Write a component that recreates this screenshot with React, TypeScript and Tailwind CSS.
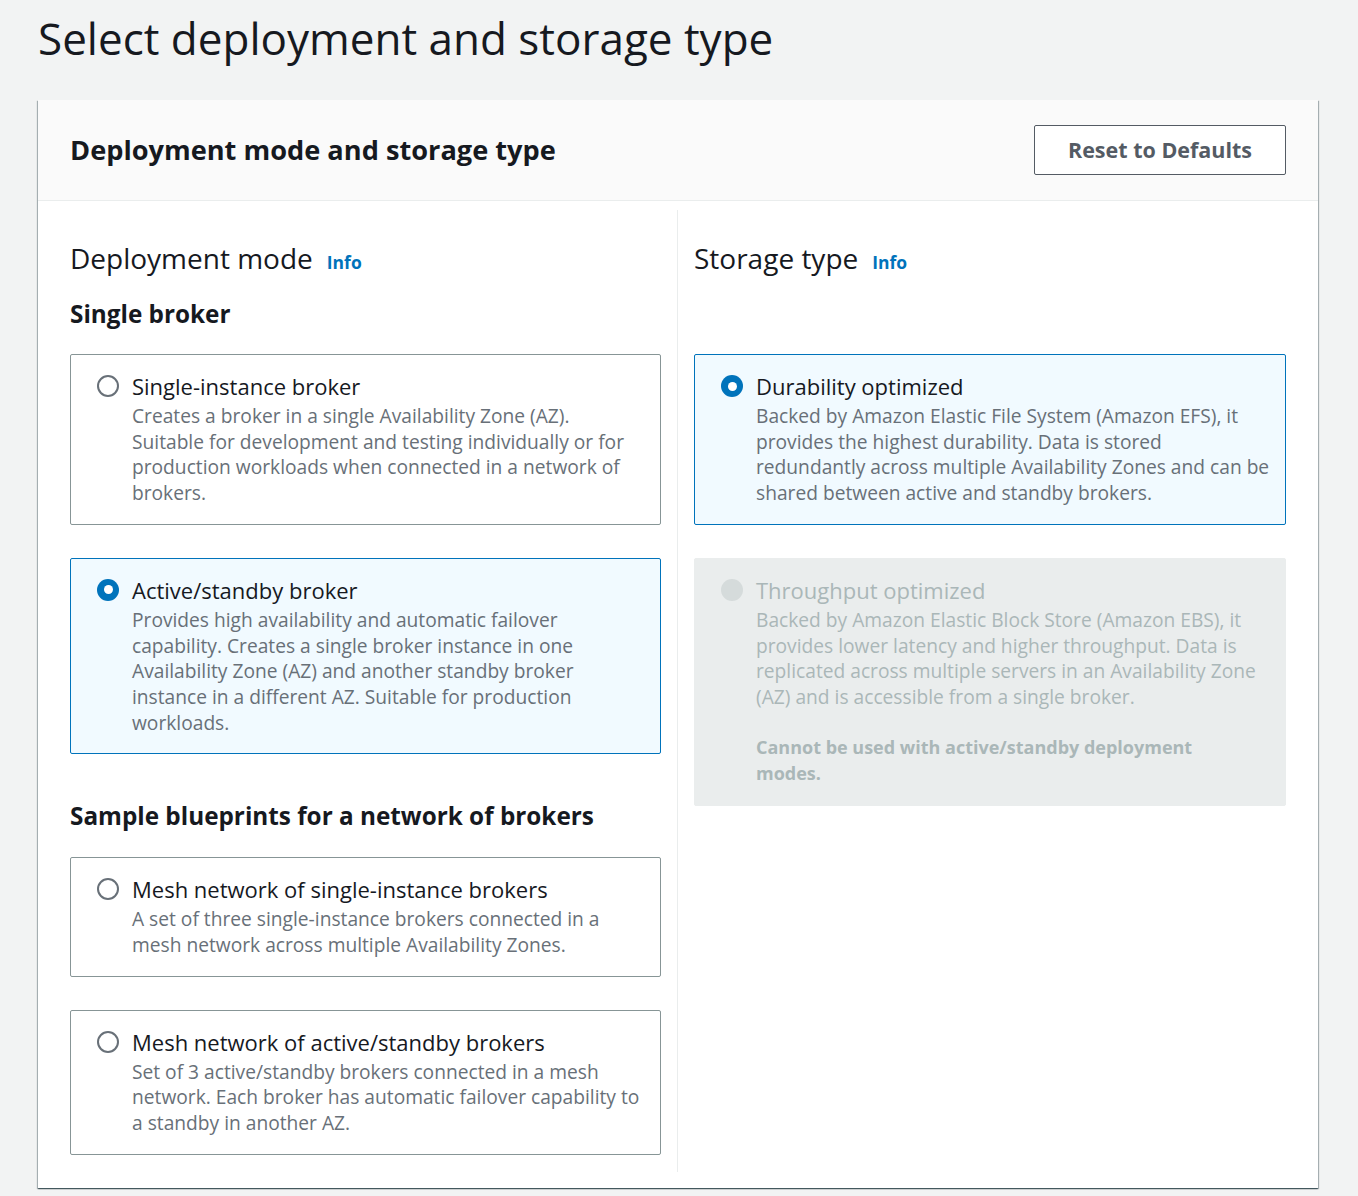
import React from "react";

type Opt = {
  title: string;
  lines: string[];
  extra?: string[];
  state: "off" | "on" | "disabled";
};

function Radio({ state }: { state: Opt["state"] }) {
  if (state === "on") {
    return (
      <span className="mt-[4px] flex h-[22px] w-[22px] shrink-0 items-center justify-center rounded-full bg-[#0073bb]">
        <span className="h-[9px] w-[9px] rounded-full bg-white" />
      </span>
    );
  }
  if (state === "disabled") {
    return <span className="mt-[4px] block h-[22px] w-[22px] shrink-0 rounded-full bg-[#d5dbdb]" />;
  }
  return <span className="mt-[4px] block h-[22px] w-[22px] shrink-0 rounded-full border-[2px] border-[#687078] bg-white" />;
}

function OptionCard({ o }: { o: Opt }) {
  const box =
    o.state === "on"
      ? "border-[#0073bb] bg-[#f1faff]"
      : o.state === "disabled"
      ? "border-[#eaeded] bg-[#eaeded]"
      : "border-[#879596] bg-white";
  const titleColor = o.state === "disabled" ? "text-[#aab7b8]" : "text-[#16191f]";
  const descColor = o.state === "disabled" ? "text-[#aab7b8]" : "text-[#687078]";
  return (
    <div className={`flex gap-[13px] rounded-[2px] border pl-[26px] pr-[16px] pt-[16px] pb-[18px] ${box}`}>
      <Radio state={o.state} />
      <div className="flex flex-col">
        <div className={`text-[22px] leading-[30px] ${titleColor}`}>{o.title}</div>
        <div className={`mt-[2px] flex flex-col text-[19.2px] leading-[25.7px] ${descColor}`}>
          {o.lines.map((l) => (
            <span key={l} className="whitespace-nowrap">
              {l}
            </span>
          ))}
        </div>
        {o.extra && (
          <div className={`mt-[25.7px] flex flex-col text-[18px] font-bold leading-[25.7px] ${descColor}`}>
            {o.extra.map((l) => (
              <span key={l} className="whitespace-nowrap">
                {l}
              </span>
            ))}
          </div>
        )}
      </div>
    </div>
  );
}

function H2({ children }: { children: React.ReactNode }) {
  return (
    <div className="flex items-baseline gap-[14px] leading-[36px]">
      <span className="text-[28px] text-[#16191f]">{children}</span>
      <span className="text-[17.5px] font-bold text-[#0073bb]">Info</span>
    </div>
  );
}

export default function App() {
  return (
    <div
      className="min-h-[1196px] bg-[#f2f3f3] pl-[38px] pr-[40px] pt-[8px]"
      style={{ fontFamily: '"Open Sans", "Noto Sans", sans-serif' }}
    >
      <h1 className="text-[44px] leading-[60px] text-[#16191f]">Select deployment and storage type</h1>
      <div className="mt-[32px] bg-white shadow-[0_1px_1px_0_rgba(0,28,36,0.5),1px_1px_1px_0_rgba(0,28,36,0.25),-1px_1px_1px_0_rgba(0,28,36,0.25)]">
        <div className="flex h-[101px] items-center justify-between border-b border-[#eaeded] bg-[#fafafa] px-[32px]">
          <h2 className="text-[27.2px] font-bold text-[#16191f]">Deployment mode and storage type</h2>
          <button className="flex h-[50px] w-[252px] items-center justify-center rounded-[2px] border border-[#545b64] bg-white text-[21.5px] font-bold text-[#545b64]">
            Reset to Defaults
          </button>
        </div>
        <div className="flex px-[32px] pt-[9px] pb-[16px]">
          <div className="flex w-[591px] flex-col pt-[30px] pb-[17px]">
            <H2>Deployment mode</H2>
            <div className="mt-[18px] text-[24.3px] font-bold leading-[32px] text-[#16191f]">Single broker</div>
            <div className="mt-[24px] flex flex-col gap-[33px]">
              <OptionCard
                o={{
                  title: "Single-instance broker",
                  lines: [
                    "Creates a broker in a single Availability Zone (AZ).",
                    "Suitable for development and testing individually or for",
                    "production workloads when connected in a network of",
                    "brokers.",
                  ],
                  state: "off",
                }}
              />
              <OptionCard
                o={{
                  title: "Active/standby broker",
                  lines: [
                    "Provides high availability and automatic failover",
                    "capability. Creates a single broker instance in one",
                    "Availability Zone (AZ) and another standby broker",
                    "instance in a different AZ. Suitable for production",
                    "workloads.",
                  ],
                  state: "on",
                }}
              />
            </div>
            <div className="mt-[46px] text-[24.3px] font-bold leading-[32px] text-[#16191f]">
              Sample blueprints for a network of brokers
            </div>
            <div className="mt-[25px] flex flex-col gap-[33px]">
              <OptionCard
                o={{
                  title: "Mesh network of single-instance brokers",
                  lines: [
                    "A set of three single-instance brokers connected in a",
                    "mesh network across multiple Availability Zones.",
                  ],
                  state: "off",
                }}
              />
              <OptionCard
                o={{
                  title: "Mesh network of active/standby brokers",
                  lines: [
                    "Set of 3 active/standby brokers connected in a mesh",
                    "network. Each broker has automatic failover capability to",
                    "a standby in another AZ.",
                  ],
                  state: "off",
                }}
              />
            </div>
          </div>
          <div className="mx-[16px] w-px bg-[#eaeded]" />
          <div className="flex w-[592px] flex-col pt-[30px]">
            <H2>Storage type</H2>
            <div className="mt-[74px] flex flex-col gap-[33px]">
              <OptionCard
                o={{
                  title: "Durability optimized",
                  lines: [
                    "Backed by Amazon Elastic File System (Amazon EFS), it",
                    "provides the highest durability. Data is stored",
                    "redundantly across multiple Availability Zones and can be",
                    "shared between active and standby brokers.",
                  ],
                  state: "on",
                }}
              />
              <OptionCard
                o={{
                  title: "Throughput optimized",
                  lines: [
                    "Backed by Amazon Elastic Block Store (Amazon EBS), it",
                    "provides lower latency and higher throughput. Data is",
                    "replicated across multiple servers in an Availability Zone",
                    "(AZ) and is accessible from a single broker.",
                  ],
                  extra: ["Cannot be used with active/standby deployment", "modes."],
                  state: "disabled",
                }}
              />
            </div>
          </div>
        </div>
      </div>
    </div>
  );
}
